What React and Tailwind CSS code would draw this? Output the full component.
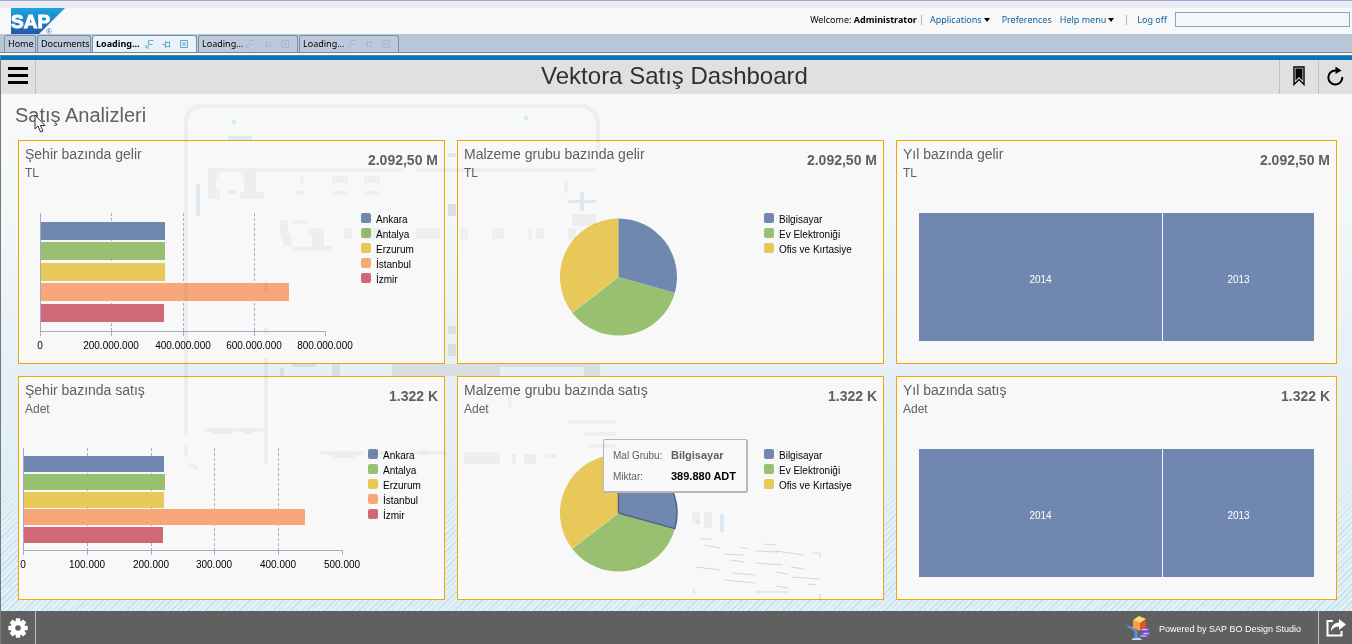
import React from "react";

const BLUE = "#7088b0";
const GREEN = "#98c070";
const YELLOW = "#e8c858";
const ORANGE = "#f8a878";
const RED = "#d06878";

const CITIES = [
  ["Ankara", BLUE],
  ["Antalya", GREEN],
  ["Erzurum", YELLOW],
  ["İstanbul", ORANGE],
  ["İzmir", RED],
];

const GROUPS = [
  ["Bilgisayar", BLUE],
  ["Ev Elektroniği", GREEN],
  ["Ofis ve Kırtasiye", YELLOW],
];

const REVENUE = {
  top: 8,
  axisY: 126,
  labelY: 144,
  barHeight: 18,
  ticks: [
    [21, "0"],
    [92, "200.000.000"],
    [164, "400.000.000"],
    [235, "600.000.000"],
    [306, "800.000.000"],
  ],
  bars: [
    [17, 146],
    [37, 146],
    [58, 146],
    [78, 270],
    [99, 145],
  ],
};

const SALES = {
  top: 7,
  axisY: 109,
  labelY: 127,
  barHeight: 16,
  ticks: [
    [4, "0"],
    [68, "100.000"],
    [132, "200.000"],
    [195, "300.000"],
    [259, "400.000"],
    [323, "500.000"],
  ],
  bars: [
    [15, 145],
    [33, 146],
    [51, 145],
    [68, 286],
    [86, 144],
  ],
};

function BarChart({ data, width, label }) {
  const { top, axisY, labelY, barHeight, ticks, bars } = data;
  const x0 = ticks[0][0];
  const x1 = ticks[ticks.length - 1][0];
  return (
    <svg width={width} height="150" className="shrink-0 overflow-visible" role="img" aria-label={label}>
      {ticks.slice(1, -1).map(([x]) => (
        <line key={x} x1={x + 0.5} x2={x + 0.5} y1={top} y2={axisY} stroke="#a3b1c4" strokeDasharray="3 2" />
      ))}
      {bars.map(([y, end], i) => (
        <rect key={y} x={x0} y={y} width={end - x0} height={barHeight} fill={CITIES[i][1]} />
      ))}
      <path d={`M${x0 + 0.5} ${top}V${axisY + 5}M${x0} ${axisY + 0.5}H${x1 + 1}`} stroke="#9fadc8" fill="none" />
      {ticks.map(([x, text]) => (
        <g key={text}>
          <line x1={x + 0.5} x2={x + 0.5} y1={axisY} y2={axisY + 5} stroke="#9fadc8" />
          <text x={x} y={labelY} textAnchor="middle" fontSize="10" fill="#000">
            {text}
          </text>
        </g>
      ))}
    </svg>
  );
}

function point(deg, r) {
  const a = (deg * Math.PI) / 180;
  return `${(160.5 + r * Math.sin(a)).toFixed(2)} ${(72 - r * Math.cos(a)).toFixed(2)}`;
}

function slice(from, to) {
  return `M160.5 72L${point(from, 58.5)}A58.5 58.5 0 0 1 ${point(to, 58.5)}Z`;
}

function PieChart({ highlight, label }) {
  return (
    <svg width="306" height="150" className="shrink-0" role="img" aria-label={label}>
      <path d={slice(105.5, 232.4)} fill={GREEN} />
      <path d={slice(232.4, 360)} fill={YELLOW} />
      <path d={slice(0, 105.5)} fill={BLUE} stroke={highlight ? "#4d6488" : "none"} strokeWidth="1.5" strokeLinejoin="round" />
      <path d={`M160.5 72L${point(232.4, 58.5)}`} stroke="#d4d890" strokeWidth="1" />
    </svg>
  );
}

function Legend({ items }) {
  return (
    <ul className="flex flex-col gap-[3px] pt-2 text-[10px] leading-3 text-black">
      {items.map(([name, color]) => (
        <li key={name} className="flex h-3 items-start gap-[5px] whitespace-nowrap">
          <span className="size-[10px] shrink-0 rounded-[2px]" style={{ backgroundColor: color }} />
          <span className="pt-px">{name}</span>
        </li>
      ))}
    </ul>
  );
}

function Treemap() {
  return (
    <div className="flex h-[136px] w-full gap-px px-[22px] pt-2 text-[10px] text-white">
      <div className="flex flex-[243] items-center justify-center bg-[#7088b0] pt-1">2014</div>
      <div className="flex flex-[151] items-center justify-center bg-[#7088b0] pt-1">2013</div>
    </div>
  );
}

function Card({ title, unit, value, children }) {
  return (
    <section className="relative h-56 border border-[#f0a800] bg-[#f8f8f8]">
      <header className="flex h-16 items-start justify-between px-1.5 pt-1 text-[#606060]">
        <div>
          <h3 className="text-sm leading-[18px]">{title}</h3>
          <p className="text-xs leading-5">{unit}</p>
        </div>
        <p className="pt-1.5 text-sm font-bold leading-[18px]">{value}</p>
      </header>
      <div className="flex">{children}</div>
    </section>
  );
}

function Tooltip() {
  return (
    <dl className="absolute left-[145px] top-[62px] grid h-[54px] w-[145px] grid-cols-[58px_1fr] content-center gap-y-1 whitespace-nowrap rounded-[2px] border border-r-2 border-b-2 border-[#b8b8b8] bg-[#f8f8f8] pl-[9px] text-[10px] leading-[17px] text-[#606060]">
      <dt>Mal Grubu:</dt>
      <dd className="text-[11px] font-bold">Bilgisayar</dd>
      <dt>Miktar:</dt>
      <dd className="text-[11px] font-bold text-black">389.880 ADT</dd>
    </dl>
  );
}

function SapLogo() {
  return (
    <svg width="54" height="27" viewBox="0 0 54 27" role="img" aria-label="SAP">
      <defs>
        <linearGradient id="sap" x1="0" y1="0" x2="0" y2="1">
          <stop offset="0" stopColor="#1aa5e0" />
          <stop offset="1" stopColor="#2458a8" />
        </linearGradient>
      </defs>
      <path d="M0 0H54L28 26H0Z" fill="url(#sap)" />
      <text x="0" y="20" fontSize="19" fontWeight="900" fill="#fff" stroke="#fff" strokeWidth="1">
        SAP
        <tspan x="35" y="26" fontSize="8" fontWeight="400" fill="#4a6fb0" stroke="none">
          ®
        </tspan>
      </text>
    </svg>
  );
}

function TabIcons({ faded }) {
  const c = faded ? "#a9b9cd" : "#6aa6cc";
  return (
    <svg width="44" height="10" fill="none" stroke={c} strokeWidth="1" aria-hidden="true">
      <path d="M1 9L4 6M1 6V9H4M3.5 5.5V1.500H8.500M4 5.500H7.500" />
      <path d="M17.500 5.500H20M20.500 2V9M21 3.500H24.500V7.500H21M24.500 2.500V8.500" />
      <path d="M35.500 1.500H42.500V8.500H35.500ZM37 3L41 7M41 3L37 7" />
    </svg>
  );
}

function Tab({ label, active, icons, width }) {
  const look = active ? "bg-[#e8f3f9] font-bold" : "bg-[#bfc9dc]";
  return (
    <button
      type="button"
      role="tab"
      aria-selected={!!active}
      className={`flex h-[17px] items-center justify-between rounded-t-[3px] border border-b-0 border-[#7892a8] px-[3px] text-[9px] text-black ${look} ${width}`}
    >
      {label}
      {icons && (
        <span className="pr-1">
          <TabIcons faded={!active} />
        </span>
      )}
    </button>
  );
}

function Caret() {
  return (
    <svg width="6" height="4" aria-hidden="true">
      <path d="M0 0H6L3 4Z" fill="#000" />
    </svg>
  );
}

function StudioIcon() {
  return (
    <svg width="26" height="26" viewBox="0 0 26 26" aria-hidden="true">
      <path d="M0 10L8 12L13 17L12 21L17 25H7L10 21L9 16Z" fill="#5c92e0" />
      <path d="M7 23.500L15 23L17 25H7Z" fill="#c4dcfa" />
      <path d="M8 5L15 8V16L8 13Z" fill="#f6a23c" />
      <path d="M15 8L21 5V12L15 16Z" fill="#e0561c" />
      <path d="M8 5L14 1L21 4L15 8Z" fill="#fbdc70" />
      <path d="M15 13H24V16H15ZM17 17H25V20H17ZM14 20H23V22H14Z" fill="#8a5cd6" />
      <path d="M17 14.500H22M19 18.500H23M16 21H21" stroke="#e0ccff" />
    </svg>
  );
}

/* Pale device outline drawn over the dashboard area. */
function Watermark() {
  return (
    <svg className="pointer-events-none absolute inset-0 size-full mix-blend-multiply" aria-hidden="true">
      <g transform="translate(-1 0)">
        <g fill="none" stroke="#f5f5f6" strokeWidth="4">
          <path d="M186 22V342M186 350V362M189 370L198 375M186 24L190 16L200 12H584L594 17L598 28V66" />
          <path d="M266 186V200M266 234V240M266 264V370" />
          <path d="M208 76H404M416 76H596M204 336H266M320 359H364M372 359H446" />
          <path d="M568 328H616M584 340H616M588 352H616" />
        </g>
        <g fill="#f5f5f6">
          <path d="M208 74H220V78L216 86V94L220 98V105H208ZM240 78H256V98H264V105H240V98H244V86Z" />
          <path d="M280 126H288V136L292 144V152H284L280 140ZM292 126H308V130H292ZM308 134H324V152H332V157H292V153H312V142H308Z" />
          <path d="M332 82H348V89H332ZM364 82H380V89H364ZM332 97H348V101H332ZM364 97H380V101H364ZM300 82H304V89H300ZM296 97H304V101H296ZM228 96H236V100H228Z" />
          <path d="M344 134H352V145H344ZM364 134H384V145H364ZM416 134H440V145H416ZM460 134H468V145H460ZM492 134H504V145H492ZM528 134H532V145H528ZM536 134H544V145H536ZM568 134H576V145H568ZM572 120H596V132H572Z" />
          <path d="M464 358H500V370H464ZM512 360H516V370H512ZM524 360H536V370H524ZM545 360H556V364H545ZM508 301H512V313H508ZM564 87H568V99H564Z" />
          <path d="M692 418H700V430H692ZM704 418H712V434H704Z" />
        </g>
        <g fill="#f0ece8">
          <path d="M392 270H500V282H392ZM500 270H584V273H500ZM584 270H600V282H584ZM448 232H456V240H448ZM448 250H456V262H448ZM292 270H316V273H292ZM332 270H340V282H332ZM280 274H284V282H280Z" />
        </g>
        <g fill="#e4f0f8">
          <path d="M228 42H252V46H228ZM232 26H236V30H232ZM524 22H528V26H524ZM196 90H200V122H196ZM580 98H584V117H580ZM568 106H596V109H568ZM448 59H456V63H448ZM696 426H700V430H696ZM720 420H724V438H720Z" />
        </g>
        <path d="M212 338H232M244 338H252M420 358H428M334 362H354" stroke="#f8f0f2" strokeWidth="4" />
        <path d="M448 116H456" stroke="#e8e4f4" strokeWidth="12" />
        <g fill="none" stroke="#dcdcde">
          <path d="M700 445H712M704 451L720 454M765 450L776 451M756 457L778 458M724 460L744 461M740 453L748 455M776 457L804 461M812 459H820V464M730 466L744 468M756 469L782 471M791 473L804 475M696 473L720 476M732 479L756 481M776 478L788 480M792 483L820 485M724 486L756 489M776 492L788 494M808 490L816 491M756 498H788M820 500V507M694 495V500" />
        </g>
      </g>
    </svg>
  );
}

export default function App() {
  return (
    <div className="flex min-h-screen flex-col bg-[#f8f8f8] font-['Liberation_Sans',Arial,sans-serif]">
      <div className="h-2 border-t border-[#98a8cc] bg-[#ebebf3]" />
      <header className="flex h-[26px] items-start justify-between pl-[11px] font-['Noto_Sans','Liberation_Sans',sans-serif] text-[9px] text-[#10609c]">
        <div className="font-['Liberation_Sans',Arial,sans-serif]">
          <SapLogo />
        </div>
        <nav className="flex items-center gap-2 whitespace-nowrap pr-0.5 pt-1">
          <span className="text-black">
            Welcome: <b>Administrator</b>
          </span>
          <span className="-ml-1 h-2.5 w-px bg-[#a8b0d8]" />
          <a href="#applications" className="flex items-center gap-0.5">
            Applications <Caret />
          </a>
          <a href="#preferences" className="pl-1">
            Preferences
          </a>
          <a href="#help" className="flex items-center gap-0.5">
            Help menu <Caret />
          </a>
          <span className="ml-1 h-2.5 w-px bg-[#a8b0d8]" />
          <a href="#logoff" className="pl-0.5">
            Log off
          </a>
          <input aria-label="Search" type="text" className="h-[15px] w-[175px] border border-[#88a8b8] bg-[#f4f6fb] px-1 outline-none" />
        </nav>
      </header>

      <div role="tablist" className="flex h-[19px] items-end gap-px border-b border-[#70889c] bg-[#b7c7d7] pl-1 font-['Noto_Sans','Liberation_Sans',sans-serif]">
        <Tab label="Home" width="w-8" />
        <Tab label="Documents" width="w-[54px]" />
        <Tab label="Loading..." active icons width="w-[105px]" />
        <Tab label="Loading..." icons width="w-[100px]" />
        <Tab label="Loading..." icons width="w-[100px]" />
      </div>

      <div className="mt-0.5 flex flex-1 flex-col border-l border-t border-[#787878]">
        <div className="h-1 bg-[#0078c0]" />
        <div className="flex h-[34px] items-stretch bg-[#e0e0e0]">
          <button type="button" aria-label="Menu" className="flex w-[35px] items-start justify-center border-r border-[#c0c0c0] pt-[7px]">
            <svg width="20" height="17" aria-hidden="true">
              <path d="M0 0H20V3H0ZM0 7H20V10H0ZM0 14H20V17H0Z" />
            </svg>
          </button>
          <h1 className="flex-1 pl-[34px] text-center text-2xl leading-8 text-[#303030]">Vektora Satış Dashboard</h1>
          <button type="button" aria-label="Bookmark" className="flex w-[39px] items-center justify-center border-l border-[#c0c0c0] pb-0.5">
            <svg width="12" height="20" viewBox="0 0 12 20" aria-hidden="true">
              <path d="M1 1H11V18.500L6 13.500L1 18.500Z" fill="#e0e0e0" stroke="#000" strokeWidth="1.400" />
              <path d="M2.500 2.500H9.500V14.500L6 11L2.500 14.500Z" />
            </svg>
          </button>
          <button type="button" aria-label="Refresh" className="flex w-[34px] items-center justify-center border-l border-[#c0c0c0] pb-0.5">
            <svg width="18" height="20" viewBox="0 0 18 20" aria-hidden="true">
              <path d="M11 4.500H8.500A7 7 0 1 0 15.300 11" fill="none" stroke="#000" strokeWidth="2" />
              <path d="M8.500 0.500L14.500 4.500L8.500 8Z" />
            </svg>
          </button>
        </div>

        <main className="relative flex-1 bg-[linear-gradient(to_bottom,#f8f8f8_0%,#f6f8f8_12%,#f0f7f8_28%,#e8f0f8_50%,#e2eff6_70%,#dcedf5_100%)] pb-[11px] pl-[17px] pr-[15px]">
          <div className="pointer-events-none absolute inset-x-0 bottom-0 h-36 bg-[repeating-linear-gradient(135deg,transparent_0px,transparent_2px,#b4d8e8_2px,#b4d8e8_3px,#f4fafc_3px,#f4fafc_4px)] opacity-60 [mask-image:linear-gradient(to_bottom,transparent,black_45%)]" />
          <h2 className="relative -ml-[3px] h-[46px] pt-2 text-xl leading-[26px] text-[#606060]">Satış Analizleri</h2>
          <div className="relative grid grid-cols-[427fr_427fr_441fr] gap-3">
            <Card title="Şehir bazında gelir" unit="TL" value="2.092,50 M">
              <BarChart data={REVENUE} width="342" label="Şehir bazında gelir" />
              <Legend items={CITIES} />
            </Card>
            <Card title="Malzeme grubu bazında gelir" unit="TL" value="2.092,50 M">
              <PieChart label="Malzeme grubu bazında gelir" />
              <Legend items={GROUPS} />
            </Card>
            <Card title="Yıl bazında gelir" unit="TL" value="2.092,50 M">
              <Treemap />
            </Card>
            <Card title="Şehir bazında satış" unit="Adet" value="1.322 K">
              <BarChart data={SALES} width="349" label="Şehir bazında satış" />
              <Legend items={CITIES} />
            </Card>
            <Card title="Malzeme grubu bazında satış" unit="Adet" value="1.322 K">
              <PieChart highlight label="Malzeme grubu bazında satış" />
              <Legend items={GROUPS} />
              <Tooltip />
            </Card>
            <Card title="Yıl bazında satış" unit="Adet" value="1.322 K">
              <Treemap />
            </Card>
          </div>
          <Watermark />
          <svg className="pointer-events-none absolute left-[33px] top-5" width="13" height="19" viewBox="0 0 13 19" aria-hidden="true">
            <path d="M1 1V15L4 12L6.500 18L9 17L6.500 11.500H11Z" fill="#f8f8f8" stroke="#303040" />
          </svg>
        </main>

        <footer className="flex h-[33px] items-stretch bg-[#606060] text-white">
          <button type="button" aria-label="Settings" className="flex w-[35px] items-center justify-center border-r border-[#c0c0c0]">
            <svg width="20" height="20" viewBox="-10 -10 20 20" aria-hidden="true">
              <g fill="#fff">
                {[0, 45, 90, 135].map((a) => (
                  <rect key={a} x="-2.300" y="-9.700" width="4.600" height="19.400" rx="0.800" transform={`rotate(${a})`} />
                ))}
                <circle r="7.300" />
              </g>
              <circle r="2.800" fill="#606060" />
            </svg>
          </button>
          <div className="flex flex-1 items-center justify-end gap-2 pr-[17px]">
            <StudioIcon />
            <span className="pt-1 text-[9px]">Powered by SAP BO Design Studio</span>
          </div>
          <button type="button" aria-label="Share" className="flex w-[34px] items-center justify-center border-l border-[#c0c0c0]">
            <svg width="20" height="18" viewBox="0 0 20 18" aria-hidden="true">
              <path d="M7 2H1.500V16.500H15.500V12" fill="none" stroke="#fff" strokeWidth="2" />
              <path d="M13 0L20 5.500L13 11V7.500C9 7.500 6.500 9 5 12.500C5 7 8 3.500 13 3.500Z" fill="#fff" />
            </svg>
          </button>
        </footer>
      </div>
    </div>
  );
}
